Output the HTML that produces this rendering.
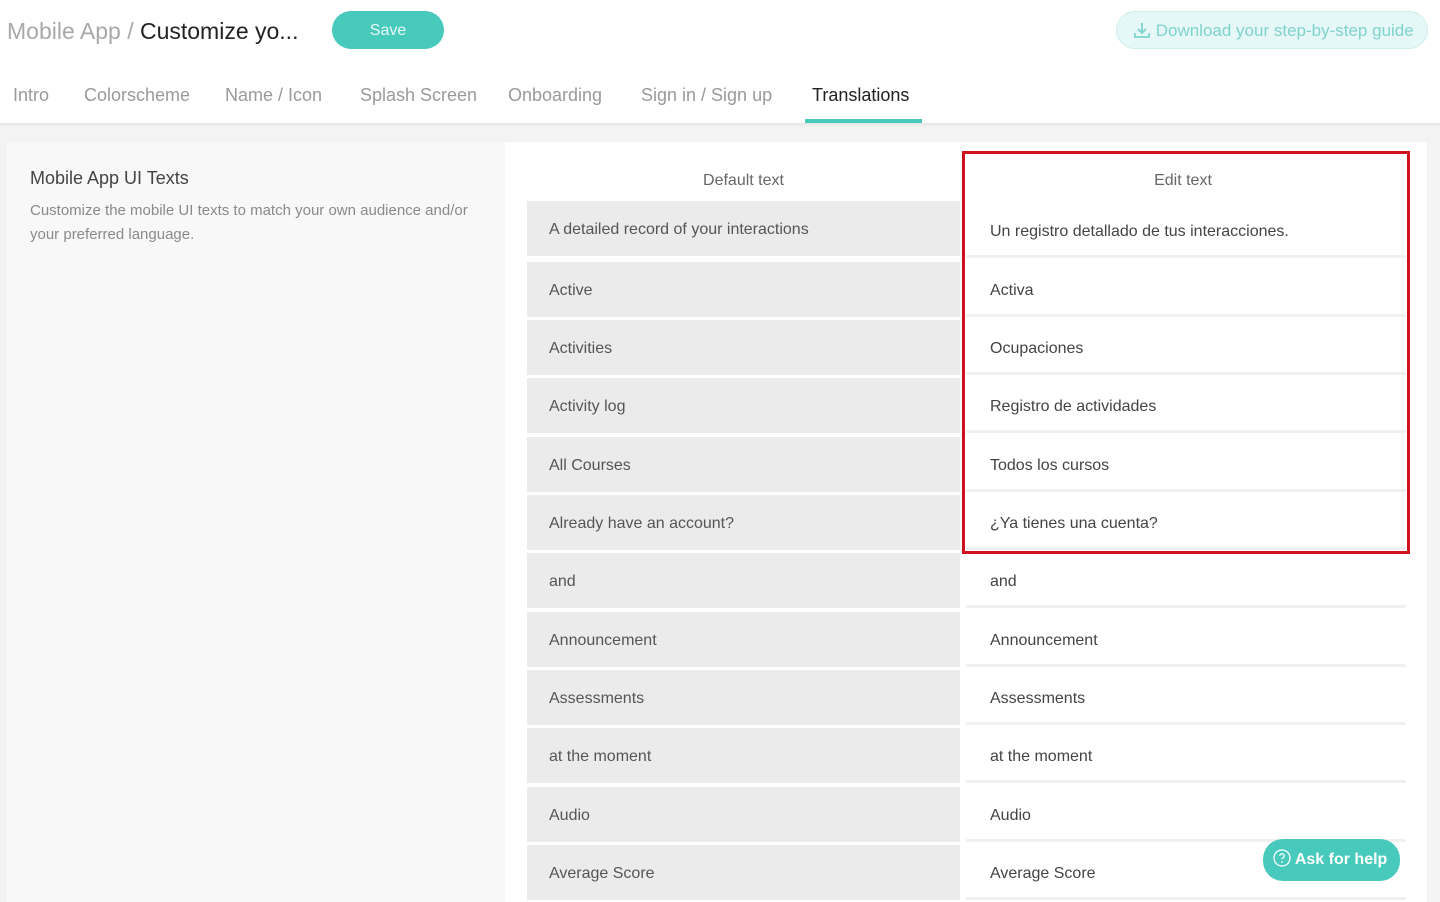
<!DOCTYPE html>
<html><head><meta charset="utf-8"><style>
*{margin:0;padding:0;box-sizing:border-box}
body{width:1440px;height:883px;overflow:hidden;background:#f3f3f3;font-family:"Liberation Sans",sans-serif;position:relative}
.a{position:absolute}
.hdr{left:0;top:0;width:1440px;height:64px;background:#fff}
.nav{left:0;top:64px;width:1440px;height:59px;background:#fff;box-shadow:0 2px 3px rgba(0,0,0,.06)}
.tab{top:85px;font-size:18px;color:#9a9a9a}
.card{left:7px;top:142px;width:1420px;height:760px;background:#fff}
.left{left:7px;top:142px;width:498px;height:760px;background:#f8f8f8}
.d{left:527px;width:433px;height:55px;background:#ebebeb;font-size:16px;color:#555;padding:20px 0 0 22px}
.e{left:966px;width:440px;height:55px;background:#fff;border-bottom:3px solid #f0f0f0;font-size:16px;color:#444;padding:20px 0 0 24px}
</style></head><body>
<div class="a hdr"></div>
<div class="a" style="left:7px;top:18px;font-size:23px;color:#a8a8a8">Mobile App / <span style="color:#222">Customize yo...</span></div>
<div class="a" style="left:332px;top:11px;width:112px;height:38px;border-radius:19px;background:#47c9bc;color:#e8f8f6;font-size:16px;text-align:center;line-height:40px">Save</div>
<div class="a" style="left:1116px;top:11px;width:312px;height:38px;border-radius:19px;background:#e6f7f7;border:1px solid #cfeeee;color:#7fd3cd;font-size:17px;line-height:38px;padding-left:16px">
<svg width="18" height="18" viewBox="0 0 18 18" style="vertical-align:-3px"><path d="M9 2v10M5 8l4 4 4-4M2 12v4h14v-4" stroke="#7fd3cd" stroke-width="1.8" fill="none"/></svg> Download your step-by-step guide</div>
<div class="a nav"></div>
<div class="a tab" style="left:13px">Intro</div>
<div class="a tab" style="left:84px">Colorscheme</div>
<div class="a tab" style="left:225px">Name / Icon</div>
<div class="a tab" style="left:360px">Splash Screen</div>
<div class="a tab" style="left:508px">Onboarding</div>
<div class="a tab" style="left:641px">Sign in / Sign up</div>
<div class="a tab" style="left:812px;color:#222">Translations</div>
<div class="a" style="left:805px;top:119px;width:117px;height:4px;background:#47c9bc"></div>
<div class="a card"></div>
<div class="a left"></div>
<div class="a" style="left:30px;top:168px;font-size:18px;color:#444">Mobile App UI Texts</div>
<div class="a" style="left:30px;top:199px;width:445px;font-size:15px;line-height:24px;color:#8a8a8a">Customize the mobile UI texts to match your own audience and/or your preferred language.</div>
<div class="a" style="left:527px;top:172px;width:433px;text-align:center;font-size:16px;color:#666">Default text</div>
<div class="a" style="left:966px;top:172px;width:434px;text-align:center;font-size:16px;color:#666">Edit text</div>
<div class="a d" style="top:201px">A detailed record of your interactions</div><div class="a e" style="top:203px">Un registro detallado de tus interacciones.</div>
<div class="a d" style="top:262px">Active</div><div class="a e" style="top:262px">Activa</div>
<div class="a d" style="top:320px">Activities</div><div class="a e" style="top:320px">Ocupaciones</div>
<div class="a d" style="top:378px">Activity log</div><div class="a e" style="top:378px">Registro de actividades</div>
<div class="a d" style="top:437px">All Courses</div><div class="a e" style="top:437px">Todos los cursos</div>
<div class="a d" style="top:495px">Already have an account?</div><div class="a e" style="top:495px">¿Ya tienes una cuenta?</div>
<div class="a d" style="top:553px">and</div><div class="a e" style="top:553px">and</div>
<div class="a d" style="top:612px">Announcement</div><div class="a e" style="top:612px">Announcement</div>
<div class="a d" style="top:670px">Assessments</div><div class="a e" style="top:670px">Assessments</div>
<div class="a d" style="top:728px">at the moment</div><div class="a e" style="top:728px">at the moment</div>
<div class="a d" style="top:787px">Audio</div><div class="a e" style="top:787px">Audio</div>
<div class="a d" style="top:845px">Average Score</div><div class="a e" style="top:845px">Average Score</div>
<div class="a" style="left:962px;top:151px;width:448px;height:403px;border:3px solid #d0101e"></div>
<div class="a" style="left:1263px;top:839px;width:137px;height:42px;border-radius:20px;background:#47c9bc;color:#fff;font-size:16px;font-weight:bold;line-height:42px;padding-left:10px">
<svg width="18" height="18" viewBox="0 0 18 18" style="vertical-align:-3px"><circle cx="9" cy="9" r="8" stroke="#fff" stroke-width="1.3" fill="none"/><path d="M6.8 7a2.2 2.2 0 1 1 2.9 2c-.5.3-.7.6-.7 1.3" stroke="#fff" stroke-width="1.3" fill="none"/><circle cx="9" cy="13" r=".9" fill="#fff"/></svg> Ask for help</div>
</body></html>
